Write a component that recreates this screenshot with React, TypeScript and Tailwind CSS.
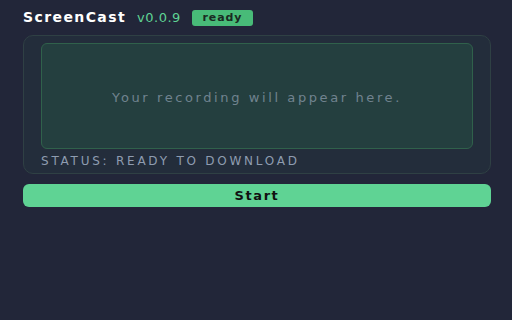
export default function App() {
  return (
    <div
      className="w-[512px] h-[320px] bg-[#222639] pl-[23px] pr-[21px] pt-[9px]"
      style={{ fontFamily: '"DejaVu Sans", "Liberation Sans", sans-serif' }}
    >
      {/* header */}
      <div className="flex items-center h-[17px]">
        <h1 className="text-[14px] font-bold text-white tracking-[0.1em]">ScreenCast</h1>
        <span className="ml-[11px] text-[13px] text-[#5fd394] tracking-[0.04em]">v0.0.9</span>
        <span className="ml-[11px] w-[61px] h-[16px] rounded-[3px] bg-[#48bb78] text-[#1a2a22] text-[11px] leading-[16px] font-bold tracking-[0.08em] flex items-center justify-center pt-[1px]">
          ready
        </span>
      </div>

      {/* preview card */}
      <div className="mt-[9px] rounded-[10px] border border-[#2f4044] bg-[#232d3b] px-[17px] pt-[7px] pb-[4px]">
        <div className="h-[106px] rounded-[6px] border border-[#30614b] bg-[#243f3f] flex items-center justify-center pt-[3px]">
          <p className="text-[13px] text-[#71838f] tracking-[0.2em]">Your recording will appear here.</p>
        </div>
        <p className="mt-[4px] text-[12px] leading-[16px] text-[#8e9cb0] tracking-[0.23em]">STATUS: READY TO DOWNLOAD</p>
      </div>

      <button className="mt-[10px] w-full h-[23px] rounded-[6px] bg-[#5fd394] text-[#111] text-[13px] font-bold tracking-[0.12em] flex items-center justify-center">
        Start
      </button>
    </div>
  );
}
